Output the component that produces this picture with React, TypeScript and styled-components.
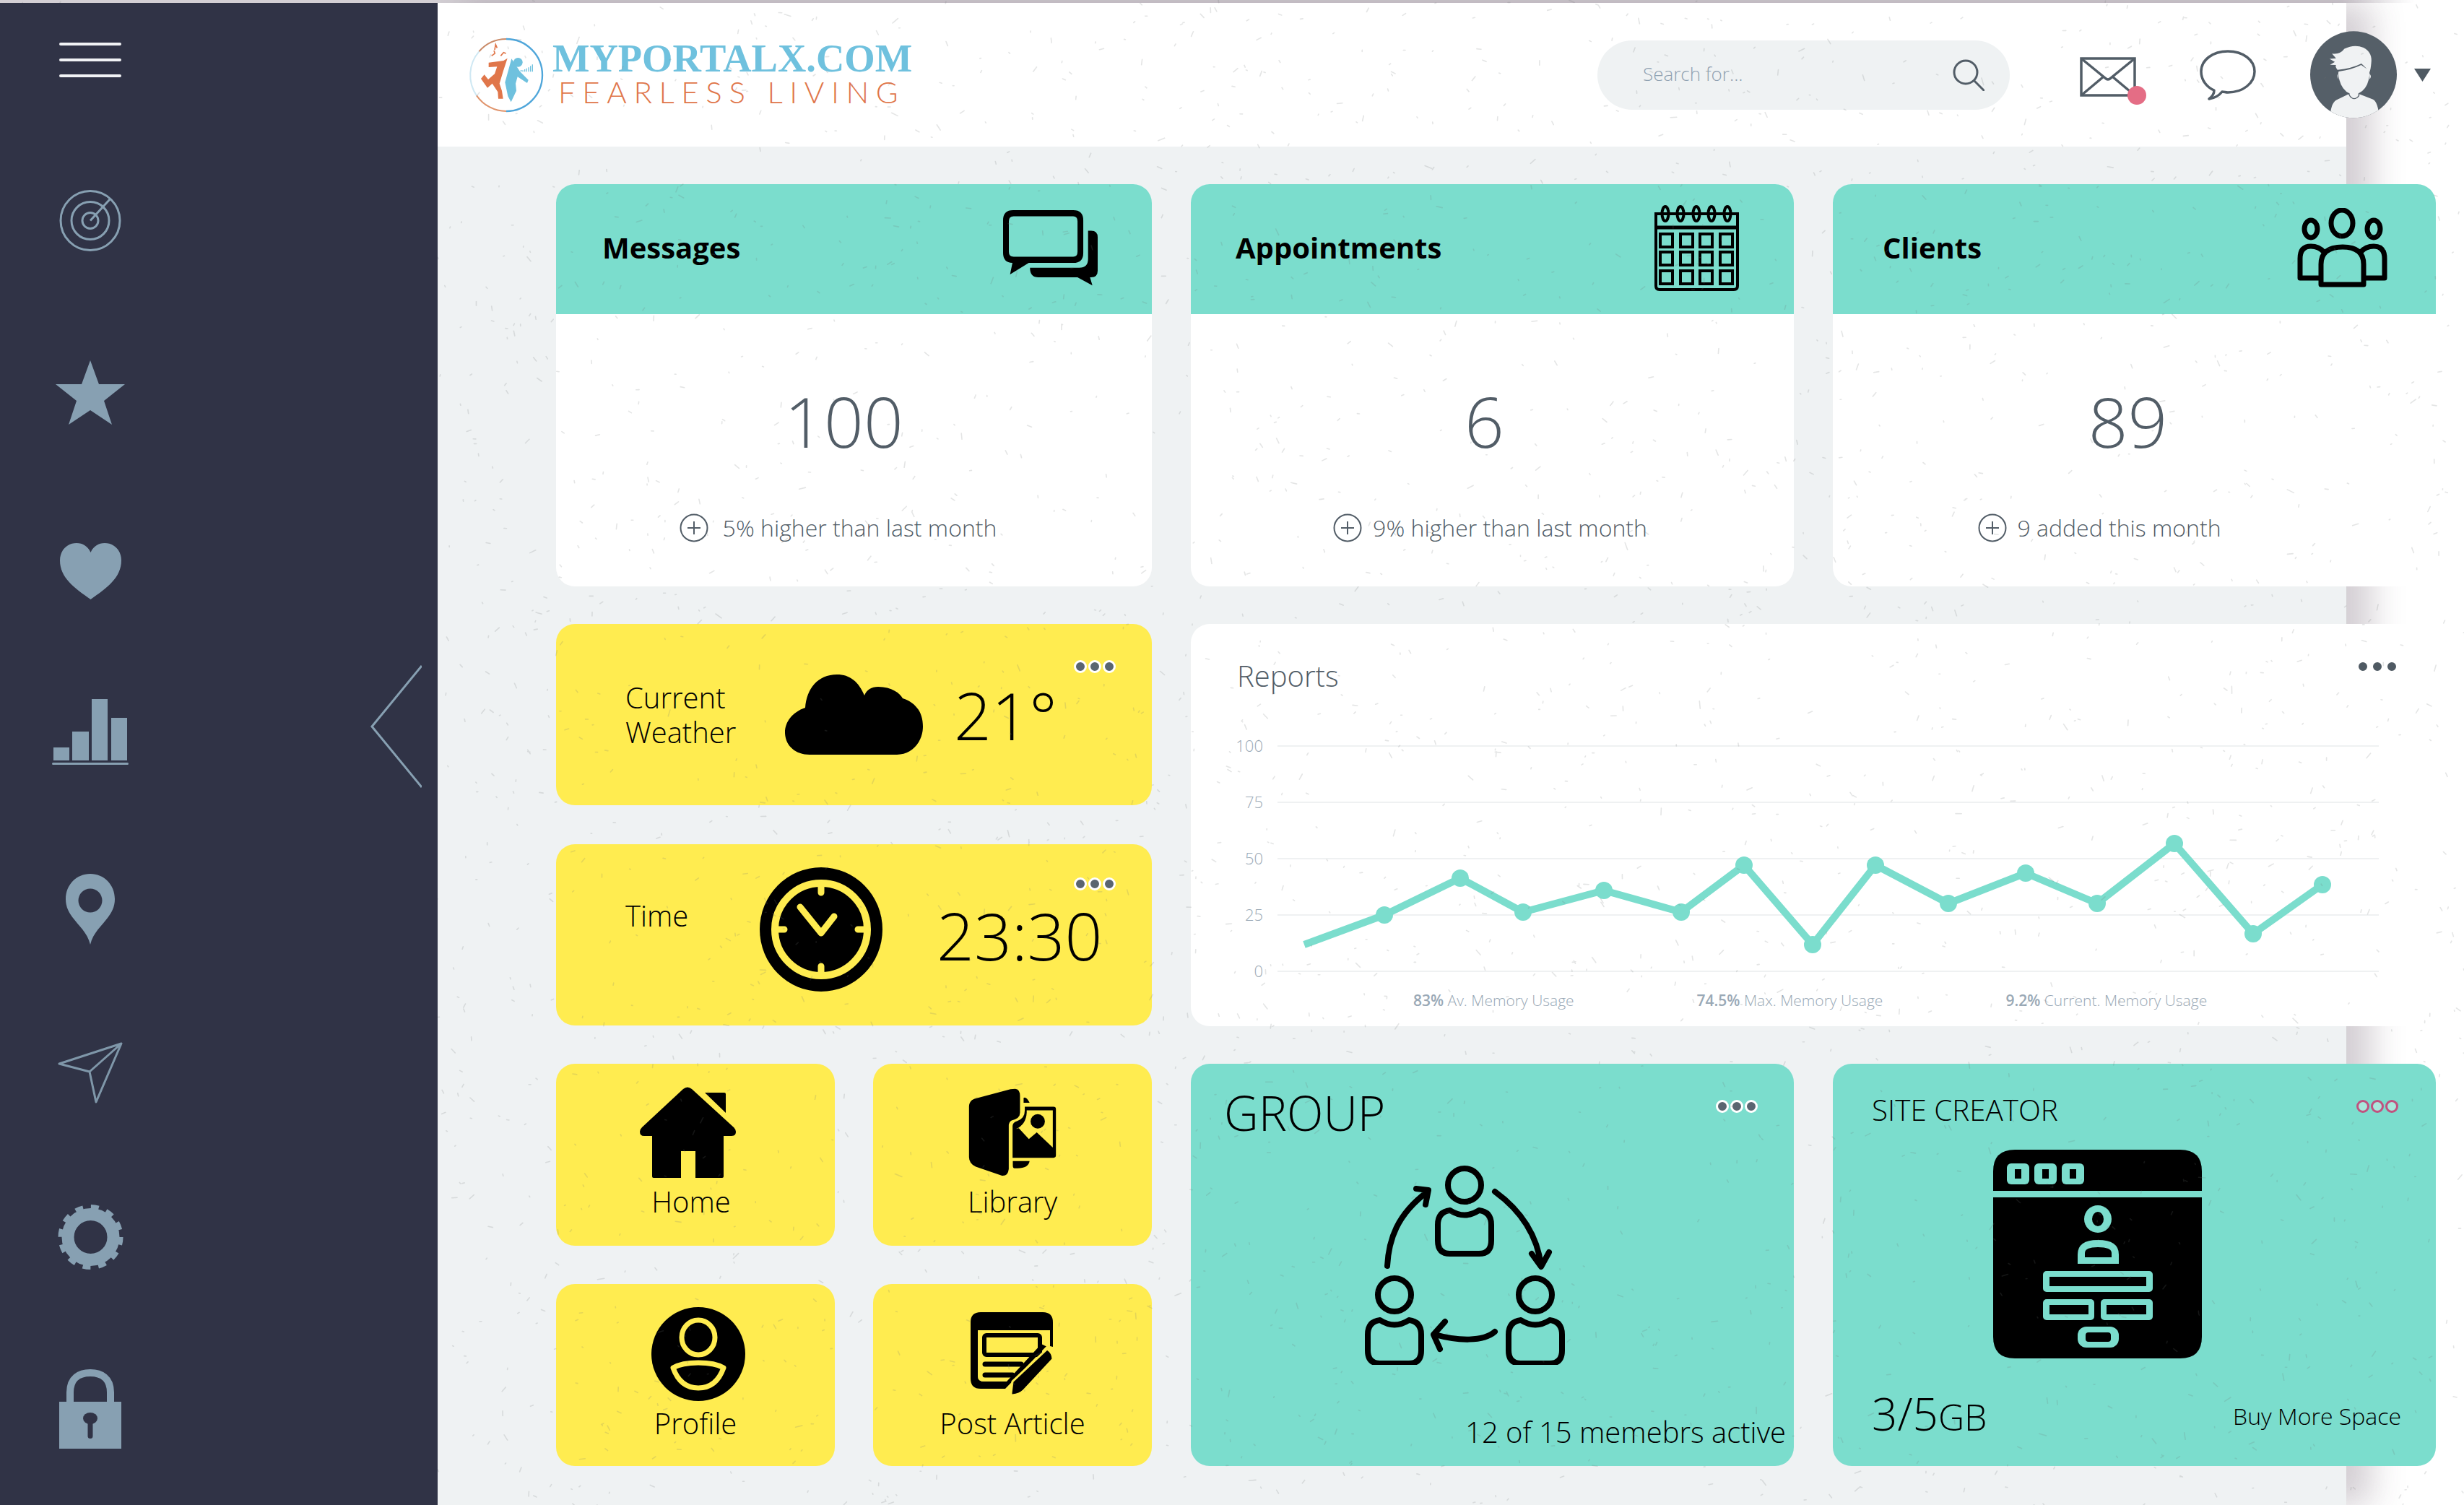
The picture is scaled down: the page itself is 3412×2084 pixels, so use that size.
import React from 'react';
import styled, { createGlobalStyle } from 'styled-components';

const TEAL = '#7bddcd';
const YELLOW = '#ffec50';
const SLATE = '#87a0b2';
const INK = '#525d67';

const GlobalStyle = createGlobalStyle`
  html, body {
    margin: 0;
    width: 3412px;
    height: 2084px;
    overflow: hidden;
    background: #fff;
    font-family: "Open Sans", "Liberation Sans", sans-serif;
  }
  * { box-sizing: border-box; }
`;

const Page = styled.div`
  position: relative;
  width: 3412px;
  height: 2084px;
  overflow: hidden;
`;

const TopEdge = styled.div`
  height: 4px;
  background: linear-gradient(90deg, #d3cfd4 95%, #fff 98%);
`;

const Shell = styled.div`
  display: flex;
  height: 2080px;
`;

/* sidebar */
const Sidebar = styled.nav`
  position: relative;
  z-index: 2;
  flex: none;
  width: 606px;
  background: #303346;
  display: flex;
  flex-direction: column;
  align-items: center;
  padding: 55px 356px 0 0;
`;

const Burger = styled.div`
  display: flex;
  flex-direction: column;
  gap: 18px;
  span {
    display: block;
    width: 86px;
    height: 4px;
    border-radius: 2px;
    background: #f1f3f5;
  }
`;

const NavIcon = styled.svg<{ $top: number }>`
  display: block;
  flex: none;
  margin-top: ${(p) => p.$top}px;
`;

const Collapse = styled.svg`
  position: absolute;
  left: 513px;
  top: 917px;
`;

/* main panel */
const Panel = styled.div`
  flex: none;
  width: 2643px;
  display: flex;
  flex-direction: column;
  background: #eff2f3;
  box-shadow: 34px 0 44px rgba(70, 50, 70, 0.24);
`;

const Header = styled.header`
  flex: none;
  height: 199px;
  background: #fff;
  display: flex;
  align-items: center;
  justify-content: space-between;
  padding-left: 34px;
`;

const Logo = styled.div`
  display: flex;
  align-items: center;
`;

const LogoText = styled.div`
  display: flex;
  flex-direction: column;
  margin-top: -4px;
`;

const LogoName = styled.span`
  font-family: "Liberation Serif", serif;
  font-weight: 700;
  font-size: 54.5px;
  line-height: 50px;
  color: #6fc1de;
  white-space: nowrap;
`;

const LogoTag = styled.span`
  font-family: "Lato", sans-serif;
  font-weight: 300;
  font-size: 42px;
  line-height: 42px;
  letter-spacing: 9.6px;
  margin-left: 8px;
  color: #e0764a;
  white-space: nowrap;
`;

const HeaderTools = styled.div`
  display: flex;
  align-items: center;
  margin-right: -117px;
`;

const Search = styled.div`
  width: 571px;
  height: 96px;
  border-radius: 48px;
  background: #eff2f3;
  display: flex;
  align-items: center;
  justify-content: space-between;
  padding: 0 35px 0 63px;
  font-size: 26px;
  font-weight: 300;
  color: #8fa1b1;
  span {
    margin-bottom: 4px;
  }
`;

const MailWrap = styled.div`
  position: relative;
  margin: 6px 0 0 97px;
  display: flex;
`;

const MailDot = styled.span`
  position: absolute;
  right: -14px;
  bottom: -11px;
  width: 26px;
  height: 26px;
  border-radius: 50%;
  background: #e46d85;
`;

const ToolIcon = styled.svg<{ $left: number }>`
  display: block;
  flex: none;
  margin-left: ${(p) => p.$left}px;
`;

const Main = styled.main`
  padding: 52px 0 0 164px;
`;

const Board = styled.div`
  width: 2604px;
  display: grid;
  grid-template-columns: 825px 835px 835px;
  grid-template-rows: repeat(3, 557px);
  column-gap: 54px;
  row-gap: 52px;
`;

/* stat cards */
const StatCard = styled.section`
  background: #fff;
  border-radius: 26px;
  overflow: hidden;
`;

const StatHead = styled.div<{ $pad: number; $iconRight: number }>`
  height: 180px;
  background: ${TEAL};
  display: flex;
  align-items: center;
  justify-content: space-between;
  padding: 0 ${(p) => p.$iconRight}px 4px ${(p) => p.$pad}px;
`;

const StatTitle = styled.h2`
  margin: 0;
  font-size: 40px;
  line-height: 56px;
  font-weight: 700;
  color: #000;
`;

const StatValue = styled.div<{ $shift: number }>`
  margin-top: 83px;
  padding-right: ${(p) => p.$shift}px;
  text-align: center;
  font-size: 96px;
  line-height: 130px;
  font-weight: 300;
  color: ${INK};
`;

const StatNote = styled.div<{ $shift: number; $gap: number }>`
  margin-top: 60px;
  padding-right: ${(p) => p.$shift}px;
  display: flex;
  align-items: center;
  justify-content: center;
  gap: ${(p) => p.$gap}px;
  font-size: 32px;
  line-height: 46px;
  font-weight: 300;
  color: ${INK};
`;

/* yellow widgets */
const LeftStack = styled.div`
  display: flex;
  flex-direction: column;
  gap: 54px;
`;

const Widget = styled.section`
  position: relative;
  height: 251px;
  padding-left: 96px;
  border-radius: 26px;
  background: ${YELLOW};
  display: flex;
  align-items: center;
  color: #000;
`;

const WidgetLabel = styled.div<{ $lift?: number }>`
  flex: none;
  width: 191px;
  font-size: 40px;
  line-height: 48px;
  font-weight: 300;
  margin-bottom: ${(p) => p.$lift ?? 0}px;
`;

const WidgetValue = styled.div<{ $left: number }>`
  font-size: 91px;
  line-height: 110px;
  font-weight: 300;
  margin-left: ${(p) => p.$left}px;
  white-space: nowrap;
`;

const DotRow = styled.div<{ $top: number; $right: number }>`
  position: absolute;
  top: ${(p) => p.$top}px;
  right: ${(p) => p.$right}px;
  display: flex;
  gap: 2px;
`;

const Dot = styled.span<{ $fill: string; $ring: string }>`
  width: 18px;
  height: 18px;
  border-radius: 50%;
  background: ${(p) => p.$fill};
  border: 3px solid ${(p) => p.$ring};
`;

const TileGrid = styled.div`
  display: grid;
  grid-template-columns: 386px 386px;
  grid-template-rows: 252px 252px;
  column-gap: 53px;
  row-gap: 53px;
`;

const Tile = styled.a<{ $top: number; $inset?: number }>`
  padding: ${(p) => p.$top}px ${(p) => p.$inset ?? 0}px 0 0;
  border-radius: 26px;
  background: ${YELLOW};
  display: flex;
  flex-direction: column;
  align-items: center;
  color: #000;
`;

const TileIcon = styled.div<{ $nudge?: number }>`
  height: 130px;
  display: flex;
  align-items: center;
  justify-content: center;
  margin-left: ${(p) => p.$nudge ?? 0}px;
`;

const TileLabel = styled.div`
  margin-top: 4px;
  font-size: 40px;
  line-height: 54px;
  font-weight: 300;
`;

/* reports */
const Reports = styled.section`
  position: relative;
  grid-column: 2 / span 2;
  border-radius: 26px;
  background: #fff;
`;

const ReportsTitle = styled.h2`
  margin: 0;
  padding: 44px 0 0 64px;
  font-size: 40px;
  line-height: 56px;
  font-weight: 300;
  color: ${INK};
`;

const Chart = styled.svg`
  display: block;
  margin-top: 36px;
  text {
    font-family: "Open Sans", sans-serif;
    font-size: 22px;
    font-weight: 300;
    fill: #9aa9b6;
  }
`;

const Legend = styled.div`
  display: flex;
  gap: 170px;
  padding: 6px 0 0 308px;
  font-size: 21px;
  line-height: 30px;
  font-weight: 300;
  color: #9aa9b6;
  b {
    font-weight: 600;
  }
`;

/* teal cards */
const TealCard = styled.section`
  position: relative;
  border-radius: 26px;
  background: ${TEAL};
  display: flex;
  flex-direction: column;
  color: #000;
`;

const GroupTitle = styled.h2`
  margin: 0;
  padding: 27px 0 0 46px;
  font-size: 66px;
  line-height: 80px;
  font-weight: 300;
`;

const GroupFoot = styled.div`
  margin-top: auto;
  padding: 0 11px 19px 0;
  text-align: right;
  font-size: 40px;
  line-height: 56px;
  font-weight: 300;
`;

const CreatorTitle = styled.h2`
  margin: 0;
  padding: 36px 0 0 54px;
  font-size: 40.4px;
  line-height: 56px;
  font-weight: 300;
`;

const CreatorFoot = styled.div`
  margin-top: auto;
  padding: 0 48px 28px 54px;
  display: flex;
  align-items: center;
  justify-content: space-between;
  font-weight: 300;
`;

const Usage = styled.span`
  font-size: 62px;
  line-height: 80px;
  small {
    font-size: 50px;
  }
`;

const BuyMore = styled.span`
  margin-top: 2px;
  font-size: 32px;
`;

const CardArt = styled.svg<{ $left: number; $top: number }>`
  display: block;
  margin: ${(p) => p.$top}px 0 0 ${(p) => p.$left}px;
`;

const Specks = styled.svg`
  position: absolute;
  inset: 0;
  z-index: 1;
  pointer-events: none;
`;

// paper grain: short flecks from a fixed seed, so each run draws the same ones
const buildSpecks = (count: number) => {
  let s = 20240611;
  const rnd = () => {
    s = (s + 0x6d2b79f5) | 0;
    let t = Math.imul(s ^ (s >>> 15), 1 | s);
    t = (t + Math.imul(t ^ (t >>> 7), 61 | t)) ^ t;
    return ((t ^ (t >>> 14)) >>> 0) / 4294967296;
  };
  let d = '';
  for (let i = 0; i < count; i++) {
    const x = rnd() * 3412;
    const y = rnd() * 2084;
    const a = rnd() * Math.PI;
    const l = 1.5 + rnd() * rnd() * 9;
    d += `M${x.toFixed(1)} ${y.toFixed(1)}l${(Math.cos(a) * l).toFixed(1)} ${(Math.sin(a) * l).toFixed(1)}`;
  }
  return d;
};

const speckPath = buildSpecks(3600);

const gridLines = [
  { y: 33, label: '100' },
  { y: 111, label: '75' },
  { y: 189, label: '50' },
  { y: 267, label: '25' },
  { y: 345, label: '0' },
];

const series: [number, number][] = [
  [157, 308], [268, 267], [373, 216], [460, 263], [572, 233], [679, 263], [766, 198], [861, 308],
  [948, 198], [1049, 251], [1156, 209], [1255, 251], [1362, 168], [1471, 293], [1567, 225],
];

const Dots: React.FC<{ top: number; right: number; fill?: string; ring?: string }> = ({
  top,
  right,
  fill = '#5a6570',
  ring = '#fff',
}) => (
  <DotRow $top={top} $right={right}>
    <Dot $fill={fill} $ring={ring} />
    <Dot $fill={fill} $ring={ring} />
    <Dot $fill={fill} $ring={ring} />
  </DotRow>
);

const PlusIcon = () => (
  <svg width="40" height="40" viewBox="0 0 40 40" fill="none" stroke={INK} strokeWidth="2">
    <circle cx="20" cy="20" r="18.5" />
    <path d="M20 11v18M11 20h18" />
  </svg>
);

const LogoMark = () => (
  <svg width="125" height="120" viewBox="0 0 375 360" fill="none" style={{ display: 'block', flex: 'none' }}>
    <path d="M183 30A150 150 0 0 0 70 82" stroke="#c98a68" strokeWidth="6" />
    <path d="M70 82A150 150 0 0 0 60 265" stroke="#cfe8f3" strokeWidth="6" />
    <path d="M60 265A150 150 0 0 0 183 330" stroke="#e0946c" strokeWidth="6" />
    <path d="M183 330A150 150 0 0 0 333 180A150 150 0 0 0 183 30" stroke="#4fa6da" strokeWidth="7" />
    <path
      fill="#e0764a"
      d="M110 128L172 120L188 110L170 165L155 215L165 245L170 278L150 278L148 250L125 215L105 233L78 195L92 178L108 198L135 175L145 145L110 147Z"
    />
    <path d="M122 100l14-10-4-12M135 75l4-22 6 14M160 100l12-14 10 4" stroke="#e0764a" strokeWidth="5" />
    <circle cx="232" cy="127" r="19" fill="#6fc1de" />
    <path
      fill="#6fc1de"
      d="M205 112L240 165L275 200L270 213L230 187L222 215L225 245L203 292L190 268L178 210Z"
    />
    <path d="M242 162h6M252 160v6M260 156v10M268 152v14M276 148v18M284 142v24M292 136v30" stroke="#6fc1de" strokeWidth="4" />
  </svg>
);

const Avatar = () => (
  <ToolIcon $left={75} width="120" height="121" viewBox="57 37 362 363">
    <defs>
      <clipPath id="avatar-clip">
        <circle cx="238" cy="218" r="181" />
      </clipPath>
    </defs>
    <circle cx="238" cy="218" r="181" fill="#555f68" />
    <g clipPath="url(#avatar-clip)" fill="#f0f2f3">
      <path d="M140 400Q142 340 165 325L216 300Q240 330 264 300L320 322Q342 335 345 400Z" />
      <path d="M176 205Q172 212 179 240Q190 282 222 297V312Q240 328 258 312V297Q292 280 301 240Q308 212 303 198Q288 192 270 178Q230 198 176 205Z" />
      <path d="M171 198Q160 185 165 178L140 177L160 165L138 152L165 150L148 130Q180 136 200 110Q240 90 280 105Q318 125 312 170Q310 195 305 207Q295 195 271 172Q230 193 171 198Z" />
      <path d="M172 215Q167 225 176 238ZM305 215Q316 225 305 238Z" />
    </g>
    <path d="M221 305Q240 332 262 305" fill="none" stroke="#555f68" strokeWidth="4" />
  </ToolIcon>
);

const GroupPerson: React.FC<{ x: number; y: number }> = ({ x, y }) => (
  <g transform={`translate(${x} ${y})`}>
    <ellipse cx="42" cy="27" rx="23" ry="23" />
    <path d="M5 104V82Q5 64 22 62Q42 75 62 62Q79 64 79 82V104Q79 122 62 122H22Q5 122 5 104Z" />
  </g>
);

const App: React.FC = () => {
  const linePoints = series.map(([x, y]) => `${x},${y}`).join(' ');

  return (
    <Page>
      <GlobalStyle />
      <TopEdge />
      <Shell>
        <Sidebar>
          <Burger>
            <span />
            <span />
            <span />
          </Burger>
          <NavIcon $top={156} width="86" height="85" viewBox="0 0 86 85" fill="none" stroke={SLATE} strokeWidth="3">
            <circle cx="43" cy="42.5" r="41" />
            <circle cx="43" cy="42.5" r="26" />
            <circle cx="43" cy="42.5" r="11" />
            <path d="M43 42.5L71 12" />
          </NavIcon>
          <NavIcon $top={151} width="96" height="89" viewBox="0 0 96 89" fill={SLATE}>
            <polygon points="48,0 60,33 96,33 67,56 78,89 48,69 18,89 29,56 0,33 36,33" />
          </NavIcon>
          <NavIcon $top={164} width="85" height="78" viewBox="0 0 85 78" fill={SLATE}>
            <path d="M42.5 78C20 62 0 48 0 24C0 10 10 0 23 0C32 0 39 5 42.5 13C46 5 53 0 62 0C75 0 85 10 85 24C85 48 65 62 42.5 78Z" />
          </NavIcon>
          <NavIcon $top={138} width="106" height="92" viewBox="0 0 106 92" fill={SLATE}>
            <rect x="2" y="67" width="22" height="18" />
            <rect x="28" y="45" width="23" height="40" />
            <rect x="55" y="0" width="22" height="85" />
            <rect x="82" y="26" width="22" height="59" />
            <rect x="0" y="88" width="106" height="3" rx="1.5" />
          </NavIcon>
          <NavIcon $top={150} width="68" height="98" viewBox="0 0 68 98" fill={SLATE}>
            <path
              fillRule="evenodd"
              d="M34 0C15 0 0 15 0 35C0 62 28 72 34 98C40 72 68 62 68 35C68 15 53 0 34 0ZM34 20.500A16.500 16.500 0 1 1 34 53.500A16.500 16.500 0 1 1 34 20.500Z"
            />
          </NavIcon>
          <NavIcon
            $top={135}
            width="90"
            height="86"
            viewBox="0 0 90 86"
            fill="none"
            stroke="#7f97a9"
            strokeWidth="3"
            strokeLinejoin="round"
          >
            <path d="M2 30L88 2L44 41ZM44 41L53 83L88 2" />
          </NavIcon>
          <NavIcon $top={139} width="91" height="90" viewBox="0 0 91 90" fill="none" stroke={SLATE}>
            <circle cx="45.5" cy="45" r="31.500" strokeWidth="17" />
            <circle cx="45.500" cy="45" r="42" strokeWidth="6" strokeDasharray="11 11" />
          </NavIcon>
          <NavIcon $top={138} width="86" height="110" viewBox="0 0 86 110">
            <path d="M15 46V32C15 12 28 5 43 5C58 5 71 12 71 32V46" fill="none" stroke={SLATE} strokeWidth="10" />
            <rect y="45" width="86" height="65" fill={SLATE} />
            <ellipse cx="43" cy="68" rx="10" ry="8" fill="#303346" />
            <rect x="39.500" y="68" width="7" height="28" rx="3.500" fill="#303346" />
          </NavIcon>
          <Collapse width="71" height="170" viewBox="0 0 71 170" fill="none" stroke={SLATE} strokeWidth="3">
            <path d="M71 1L2 85L71 169" />
          </Collapse>
        </Sidebar>

        <Panel>
          <Header>
            <Logo>
              <LogoMark />
              <LogoText>
                <LogoName>MYPORTALX.COM</LogoName>
                <LogoTag>FEARLESS LIVING</LogoTag>
              </LogoText>
            </Logo>
            <HeaderTools>
              <Search>
                <span>Search for...</span>
                <svg width="44" height="44" viewBox="0 0 44 44" fill="none" stroke={INK} strokeWidth="3">
                  <circle cx="18" cy="18" r="16" />
                  <path d="M30 30L43 43" strokeLinecap="round" />
                </svg>
              </Search>
              <MailWrap>
                <svg width="78" height="55" viewBox="0 0 78 55" fill="none" stroke={INK} strokeWidth="3.500" style={{ display: 'block' }}>
                  <rect x="2" y="2" width="74" height="51" />
                  <path d="M2 2L35 29Q39 33 43 29L76 2M2 53L33 27M76 53L45 27" />
                </svg>
                <MailDot />
              </MailWrap>
              <ToolIcon $left={88} width="78" height="70" viewBox="0 0 78 70" fill="none" stroke={INK} strokeWidth="3.500" strokeLinejoin="round">
                <path d="M39 2C18 2 2 14 2 30C2 42 10 52 20 56C20 60 17 65 13 68C20 67 27 63 31 58C34 58 36 59 39 59C60 59 76 46 76 30C76 14 60 2 39 2Z" />
              </ToolIcon>
              <Avatar />
              <ToolIcon $left={24} width="23" height="18" viewBox="0 0 23 18" fill="#4f5a63">
                <path d="M0 0H23L11.500 18Z" />
              </ToolIcon>
            </HeaderTools>
          </Header>

          <Main>
            <Board>
              <StatCard>
                <StatHead $pad={64} $iconRight={74}>
                  <StatTitle>Messages</StatTitle>
                  <svg width="133" height="107" viewBox="55 40 400 320">
                    <path
                      fillRule="evenodd"
                      d="M100 42H350Q392 42 392 84V220Q392 262 350 262H165L87 310L97 262Q58 260 58 220V84Q58 42 100 42ZM102 68Q82 68 82 88V215Q82 236 102 236H350Q368 236 368 215V88Q368 68 350 68Z"
                    />
                    <path d="M412 128H425Q452 128 452 155V295Q452 322 425 322H420L430 356L368 322H205Q170 322 170 282H375Q412 282 412 245Z" />
                  </svg>
                </StatHead>
                <StatValue $shift={28}>100</StatValue>
                <StatNote $shift={44} $gap={20}>
                  <PlusIcon />
                  5% higher than last month
                </StatNote>
              </StatCard>

              <StatCard>
                <StatHead $pad={62} $iconRight={76}>
                  <StatTitle>Appointments</StatTitle>
                  <svg width="117" height="119" viewBox="0 0 117 119" fill="none" stroke="#000" strokeWidth="4">
                    <path d="M2 12V112Q2 117 7 117H110Q115 117 115 112V12Z" />
                    <path d="M2 31H115" strokeWidth="5" />
                    {[15, 36, 58, 79, 101].map((x) => (
                      <ellipse key={x} cx={x} cy="12" rx="4.500" ry="10" />
                    ))}
                    {[40, 65, 91].map((y) =>
                      [8, 36, 63, 91].map((x) => <rect key={`${x}-${y}`} x={x} y={y} width="17" height="18" />),
                    )}
                  </svg>
                </StatHead>
                <StatValue $shift={22}>6</StatValue>
                <StatNote $shift={6} $gap={15}>
                  <PlusIcon />
                  9% higher than last month
                </StatNote>
              </StatCard>

              <StatCard>
                <StatHead $pad={69} $iconRight={67}>
                  <StatTitle>Clients</StatTitle>
                  <svg width="125" height="110" viewBox="0 0 125 110" fill="none" stroke="#000" strokeWidth="7" strokeLinejoin="round">
                    <ellipse cx="62" cy="21" rx="15" ry="18" />
                    <ellipse cx="19" cy="29" rx="9" ry="12" />
                    <ellipse cx="106" cy="29" rx="9" ry="12" />
                    <path d="M33 106V78Q33 54 63 54Q92 54 92 78V106Z" />
                    <path d="M33 97H4V70Q4 53 19 53Q30 53 37 61" />
                    <path d="M92 97H121V70Q121 53 106 53Q95 53 88 61" />
                  </svg>
                </StatHead>
                <StatValue $shift={18}>89</StatValue>
                <StatNote $shift={96} $gap={14}>
                  <PlusIcon />
                  9 added this month
                </StatNote>
              </StatCard>

              <LeftStack>
                <Widget>
                  <WidgetLabel>Current Weather</WidgetLabel>
                  <svg width="191" height="111" viewBox="0 0 191 111" style={{ flex: 'none', marginLeft: 30 }}>
                    <path d="M34 111H155C176 111 191 93 191 72C191 52 181 39 163 33C159 26 148 17 129 17C120 17 113 21 110 29C102 10 90 0 72 0C45 0 30 20 28 46C10 52 0 66 0 80C0 98 14 111 34 111Z" />
                  </svg>
                  <WidgetValue $left={43}>21°</WidgetValue>
                  <Dots top={50} right={50} />
                </Widget>
                <Widget>
                  <WidgetLabel $lift={54}>Time</WidgetLabel>
                  <svg width="170" height="172" viewBox="0 0 170 172" style={{ flex: 'none', margin: '0 0 16px -5px' }}>
                    <ellipse cx="85" cy="86" rx="85" ry="86" />
                    <circle cx="85" cy="86" r="64" fill="none" stroke={YELLOW} strokeWidth="10" />
                    <path
                      d="M85 22V35M85 137V150M21 86H34M136 86H149M56 55L85 91L103 68"
                      fill="none"
                      stroke={YELLOW}
                      strokeWidth="9"
                      strokeLinecap="round"
                      strokeLinejoin="round"
                    />
                  </svg>
                  <WidgetValue $left={75}>23:30</WidgetValue>
                  <Dots top={46} right={50} />
                </Widget>
              </LeftStack>

              <Reports>
                <ReportsTitle>Reports</ReportsTitle>
                <Dots top={50} right={52} fill="#4f5a63" />
                <Chart width="1724" height="364" viewBox="0 0 1724 364" fill="none">
                  {gridLines.map((g) => (
                    <React.Fragment key={g.label}>
                      <line x1="120" x2="1645" y1={g.y} y2={g.y} stroke="#eff1f2" strokeWidth="2" />
                      <text x="100" y={g.y + 8} textAnchor="end">
                        {g.label}
                      </text>
                    </React.Fragment>
                  ))}
                  <polyline points={linePoints} stroke={TEAL} strokeWidth="10" strokeLinejoin="round" />
                  {series.slice(1).map(([x, y]) => (
                    <circle key={x} cx={x} cy={y} r="12" fill={TEAL} />
                  ))}
                </Chart>
                <Legend>
                  <span>
                    <b>83%</b> Av. Memory Usage
                  </span>
                  <span>
                    <b>74.5%</b> Max. Memory Usage
                  </span>
                  <span>
                    <b>9.2%</b> Current. Memory Usage
                  </span>
                </Legend>
              </Reports>

              <TileGrid>
                <Tile $top={30} $inset={12}>
                  <TileIcon $nudge={-10}>
                    <svg width="133" height="126" viewBox="0 0 133 126">
                      <path d="M60 3Q66 -2 72 3L130 56Q133 59 133 62Q133 68 127 68H116V124Q116 126 114 126H77V89H57V126H19Q17 126 17 124V68H6Q0 68 0 62Q0 59 3 56Z" />
                      <path d="M90 8H117Q119 8 119 10V36Z" />
                    </svg>
                  </TileIcon>
                  <TileLabel>Home</TileLabel>
                </Tile>
                <Tile $top={30}>
                  <TileIcon>
                    <svg width="123" height="122" viewBox="60 38 370 368">
                      <path d="M255 40Q275 42 275 70V140Q275 165 240 172Q228 178 228 195V375Q225 405 200 403L90 365Q62 352 62 325V115Q62 90 85 82L235 42Z" />
                      <path d="M290 78Q300 70 315 98H290Z" />
                      <path d="M295 115H415Q425 115 425 125V318Q425 328 415 328H244V195Q245 180 262 175Q295 165 295 130Z" />
                      <path d="M303 130H412V285L345 222L312 250L270 205L258 208Q300 190 303 140Z" fill={YELLOW} />
                      <circle cx="349" cy="176" r="30" />
                      <path d="M245 342H315Q310 372 265 372H252Q245 372 245 360Z" />
                    </svg>
                  </TileIcon>
                  <TileLabel>Library</TileLabel>
                </Tile>
                <Tile $top={32}>
                  <TileIcon $nudge={8}>
                    <svg width="130" height="130" viewBox="0 0 130 130">
                      <circle cx="65" cy="65" r="65" />
                      <ellipse cx="65" cy="42" rx="23" ry="24" fill="none" stroke={YELLOW} strokeWidth="7" />
                      <path d="M30 84Q42 77 65 77Q88 77 100 84Q90 112 65 112Q40 112 30 84Z" fill="none" stroke={YELLOW} strokeWidth="7" strokeLinejoin="round" />
                    </svg>
                  </TileIcon>
                  <TileLabel>Profile</TileLabel>
                </Tile>
                <Tile $top={32}>
                  <TileIcon>
                    <svg width="116" height="116" viewBox="0 0 116 116">
                      <path d="M14 0H100Q114 0 114 14V48L106 46L48 106H14Q0 106 0 92V14Q0 0 14 0ZM10 25V88Q10 96 18 96H46L60 78V25Z" fillRule="evenodd" />
                      <path d="M10 25H110V50L98 44L50 96H18Q10 96 10 88Z" fill={YELLOW} />
                      <rect x="19" y="32" width="77" height="27" rx="3" fill="none" stroke="#000" strokeWidth="6" />
                      <path d="M20 72H70M20 87H58" stroke="#000" strokeWidth="7" strokeLinecap="round" />
                      <path d="M106 51Q114 56 114 65L74 108Q68 114 58 115Q56 116 56 112L58 96Z" stroke={YELLOW} strokeWidth="3" />
                    </svg>
                  </TileIcon>
                  <TileLabel>Post Article</TileLabel>
                </Tile>
              </TileGrid>

              <TealCard>
                <GroupTitle>GROUP</GroupTitle>
                <Dots top={50} right={50} />
                <CardArt $left={240} $top={32} width="278" height="278" viewBox="0 0 278 278" fill="none" stroke="#000" strokeWidth="8" strokeLinecap="round" strokeLinejoin="round">
                  <GroupPerson x={97} y={2} />
                  <GroupPerson x={0} y={154} />
                  <GroupPerson x={195} y={154} />
                  <path d="M32 141C34 105 45 70 88 38M72 34L89 36L85 56" />
                  <path d="M181 38C218 65 240 100 245 141M232 124L245 142L256 122" />
                  <path d="M181 232C165 246 130 245 98 236M112 218L96 236L105 256" />
                </CardArt>
                <GroupFoot>12 of 15 memebrs active</GroupFoot>
              </TealCard>

              <TealCard>
                <CreatorTitle>SITE CREATOR</CreatorTitle>
                <Dots top={50} right={52} fill="#a9e8dc" ring="#c0527f" />
                <CardArt $left={222} $top={27} width="289" height="289" viewBox="0 0 289 289">
                  <path d="M30 0H259Q289 0 289 30V259Q289 289 259 289H30Q0 289 0 259V30Q0 0 30 0Z" />
                  <rect y="57" width="289" height="9" fill={TEAL} />
                  {[19, 57, 95].map((x) => (
                    <g key={x}>
                      <rect x={x} y="19" width="31" height="29" rx="6" fill={TEAL} />
                      <rect x={x + 11} y="27" width="9" height="13" />
                    </g>
                  ))}
                  <ellipse cx="145" cy="96" rx="19" ry="19" fill={TEAL} />
                  <ellipse cx="145" cy="96" rx="8" ry="10" />
                  <path d="M117 158V145Q117 125 145 125Q174 125 174 145V158Z" fill={TEAL} />
                  <path d="M127 149V143Q127 135 145 135Q164 135 164 143V149Z" />
                  <rect x="69" y="168" width="152" height="29" rx="5" fill={TEAL} />
                  <rect x="78" y="176" width="134" height="13" />
                  <rect x="69" y="207" width="71" height="29" rx="5" fill={TEAL} />
                  <rect x="78" y="215" width="54" height="13" />
                  <rect x="149" y="207" width="72" height="29" rx="5" fill={TEAL} />
                  <rect x="157" y="215" width="55" height="13" />
                  <rect x="117" y="245" width="57" height="29" rx="12" fill={TEAL} />
                  <rect x="128" y="253" width="35" height="13" rx="4" />
                </CardArt>
                <CreatorFoot>
                  <Usage>
                    3/5<small>GB</small>
                  </Usage>
                  <BuyMore>Buy More Space</BuyMore>
                </CreatorFoot>
              </TealCard>
            </Board>
          </Main>
        </Panel>
      </Shell>
      <Specks width="3412" height="2084" viewBox="0 0 3412 2084" fill="none">
        <path d={speckPath} stroke="rgba(110,115,115,0.19)" strokeWidth="1.6" strokeLinecap="round" />
      </Specks>
    </Page>
  );
};

export default App;
